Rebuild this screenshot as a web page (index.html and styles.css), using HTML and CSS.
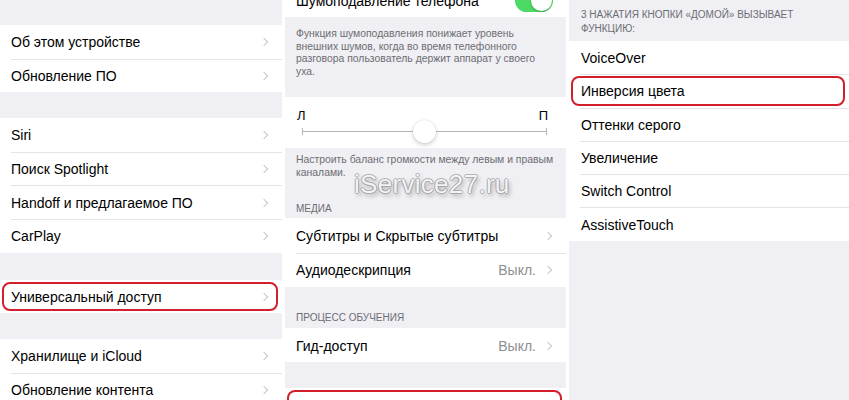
FILE: index.html
```html
<!DOCTYPE html>
<html lang="ru">
<head>
<meta charset="utf-8">
<title>Универсальный доступ</title>
<link rel="stylesheet" href="styles.css">
</head>
<body>
<div class="screens">
  <section class="panel panel-left">
    <div class="gap gap-top"></div>
    <div class="group">
      <div class="row"><span class="label">Об этом устройстве</span><span class="chev"></span></div>
      <div class="row"><span class="label">Обновление ПО</span><span class="chev"></span></div>
    </div>
    <div class="gap"></div>
    <div class="group">
      <div class="row"><span class="label">Siri</span><span class="chev"></span></div>
      <div class="row"><span class="label">Поиск Spotlight</span><span class="chev"></span></div>
      <div class="row"><span class="label">Handoff и предлагаемое ПО</span><span class="chev"></span></div>
      <div class="row"><span class="label">CarPlay</span><span class="chev"></span></div>
    </div>
    <div class="gap gap-mid"></div>
    <div class="group">
      <div class="row marked"><span class="label">Универсальный доступ</span><span class="chev"></span></div>
    </div>
    <div class="gap gap-small"></div>
    <div class="group">
      <div class="row"><span class="label">Хранилище и iCloud</span><span class="chev"></span></div>
      <div class="row"><span class="label">Обновление контента</span><span class="chev"></span></div>
    </div>
  </section>

  <section class="panel panel-mid">
    <div class="group">
      <div class="row row-cut"><span class="label">Шумоподавление телефона</span><span class="switch"><span class="knob"></span></span></div>
    </div>
    <p class="footer footer-noise">Функция шумоподавления понижает уровень внешних шумов, когда во время телефонного разговора пользователь держит аппарат у своего уха.</p>
    <div class="group">
      <div class="balance">
        <div class="lr"><span>Л</span><span>П</span></div>
        <div class="slider"><span class="track"></span><span class="thumb"></span></div>
      </div>
    </div>
    <p class="footer footer-balance">Настроить баланс громкости между левым и правым каналами.</p>
    <h3 class="header header-media">МЕДИА</h3>
    <div class="group">
      <div class="row"><span class="label">Субтитры и Скрытые субтитры</span><span class="chev"></span></div>
      <div class="row"><span class="label">Аудиодескрипция</span><span class="value">Выкл.</span><span class="chev"></span></div>
    </div>
    <h3 class="header header-learn">ПРОЦЕСС ОБУЧЕНИЯ</h3>
    <div class="group">
      <div class="row"><span class="label">Гид-доступ</span><span class="value">Выкл.</span><span class="chev"></span></div>
    </div>
    <div class="gap"></div>
    <div class="group">
      <div class="row marked marked-bottom"><span class="label"></span></div>
    </div>
    <div class="watermark">iService27.ru</div>
  </section>

  <section class="panel panel-right">
    <h3 class="header header-triple">3 НАЖАТИЯ КНОПКИ «ДОМОЙ» ВЫЗЫВАЕТ ФУНКЦИЮ:</h3>
    <div class="group">
      <div class="row"><span class="label">VoiceOver</span></div>
      <div class="row marked"><span class="label">Инверсия цвета</span></div>
      <div class="row"><span class="label">Оттенки серого</span></div>
      <div class="row"><span class="label">Увеличение</span></div>
      <div class="row"><span class="label">Switch Control</span></div>
      <div class="row"><span class="label">AssistiveTouch</span></div>
    </div>
  </section>
</div>
</body>
</html>
```

FILE: styles.css
```css
* { box-sizing: border-box; }

html, body {
  margin: 0;
  padding: 0;
  background: #ffffff;
}

body {
  width: 849px;
  height: 400px;
  overflow: hidden;
  font-family: "Liberation Sans", Arial, "Noto Sans", sans-serif;
  color: #000;
}

.screens {
  display: grid;
  grid-template-columns: 282px 281px 280px;
  column-gap: 3px;
  height: 400px;
}

.panel {
  position: relative;
  background: #efeff4;
  overflow: hidden;
  height: 400px;
}

.gap { height: 26px; }
.gap-top { height: 25px; }
.gap-mid { height: 27px; }
.gap-small { height: 26px; }

.group {
  background: #fff;
}

.row {
  position: relative;
  display: flex;
  align-items: center;
  height: 33.6px;
  padding: 1px 13px 0 11px;
  font-size: 14px;
}

.panel-mid .row { height: 34.3px; }
.panel-right .row { height: 33.3px; padding-left: 12px; padding-top: 1px; }

.row + .row::before {
  content: "";
  position: absolute;
  top: 0;
  left: 11px;
  right: 0;
  height: 1px;
  background: #e4e4e8;
}

.label {
  flex: 1;
  white-space: nowrap;
}

.value {
  color: #8e8e93;
  margin-right: 9px;
}

.chev {
  width: 6px;
  height: 6px;
  border-top: 1.4px solid #c7c7cc;
  border-right: 1.4px solid #c7c7cc;
  transform: rotate(45deg);
  margin-right: 2px;
}

.marked::after {
  content: "";
  position: absolute;
  left: 2px;
  right: 4px;
  top: 2px;
  bottom: 2px;
  border: 2px solid #d21f2b;
  border-radius: 8px;
}

.marked-bottom::after {
  bottom: -10px;
}

/* middle panel */
.row-cut {
  margin-top: -17px;
}

.switch {
  position: relative;
  width: 38px;
  height: 23px;
  border-radius: 12px;
  background: #4cd964;
}

.knob {
  position: absolute;
  right: 1px;
  top: 1px;
  width: 21px;
  height: 21px;
  border-radius: 50%;
  background: #fff;
  box-shadow: 0 1px 2px rgba(0,0,0,0.25);
}

.footer {
  margin: 0;
  color: #6d6d72;
  font-size: 10.4px;
  line-height: 12.6px;
  padding: 11px 6px 0 11px;
}

.footer-noise {
  height: 80px;
  padding-right: 12px;
}

.footer-balance {
  padding-top: 6px;
  height: 43px;
}

.balance {
  height: 51px;
  padding: 12px 11px 0 12px;
}

.lr {
  display: flex;
  justify-content: space-between;
  font-size: 13px;
  line-height: 14px;
  padding-right: 7px;
}

.slider {
  position: relative;
  height: 14px;
  margin: 2px 8px 0 5px;
}

.track {
  position: absolute;
  left: 0;
  right: 0;
  top: 6px;
  height: 1px;
  background: #b5b5ba;
}

.track::before,
.track::after {
  content: "";
  position: absolute;
  top: -3px;
  width: 1px;
  height: 7px;
  background: #b5b5ba;
}
.track::before { left: 0; }
.track::after { right: 0; }

.thumb {
  position: absolute;
  left: 111px;
  top: -5px;
  width: 23px;
  height: 23px;
  border-radius: 50%;
  background: #fff;
  box-shadow: 0 2px 4px rgba(0,0,0,0.18), 0 0 1px rgba(0,0,0,0.2);
}

.header {
  margin: 0;
  font-weight: normal;
  color: #6d6d72;
  font-size: 10px;
  line-height: 14px;
  padding: 0 11px;
}

.header-media {
  height: 27px;
  padding-top: 11px;
}

.header-learn {
  height: 41px;
  padding-top: 24px;
}

.header-triple {
  height: 41px;
  padding: 8px 12px 0;
  width: 250px;
}

.watermark {
  position: absolute;
  left: 69px;
  top: 169px;
  font-size: 26px;
  letter-spacing: 0.3px;
  color: rgba(255,255,255,0.92);
  text-shadow:
    1px 0 0 rgba(130,130,135,0.55),
    -1px 0 0 rgba(130,130,135,0.55),
    0 1px 0 rgba(130,130,135,0.55),
    0 -1px 0 rgba(130,130,135,0.55),
    2px 3px 4px rgba(0,0,0,0.3);
  white-space: nowrap;
}
```
